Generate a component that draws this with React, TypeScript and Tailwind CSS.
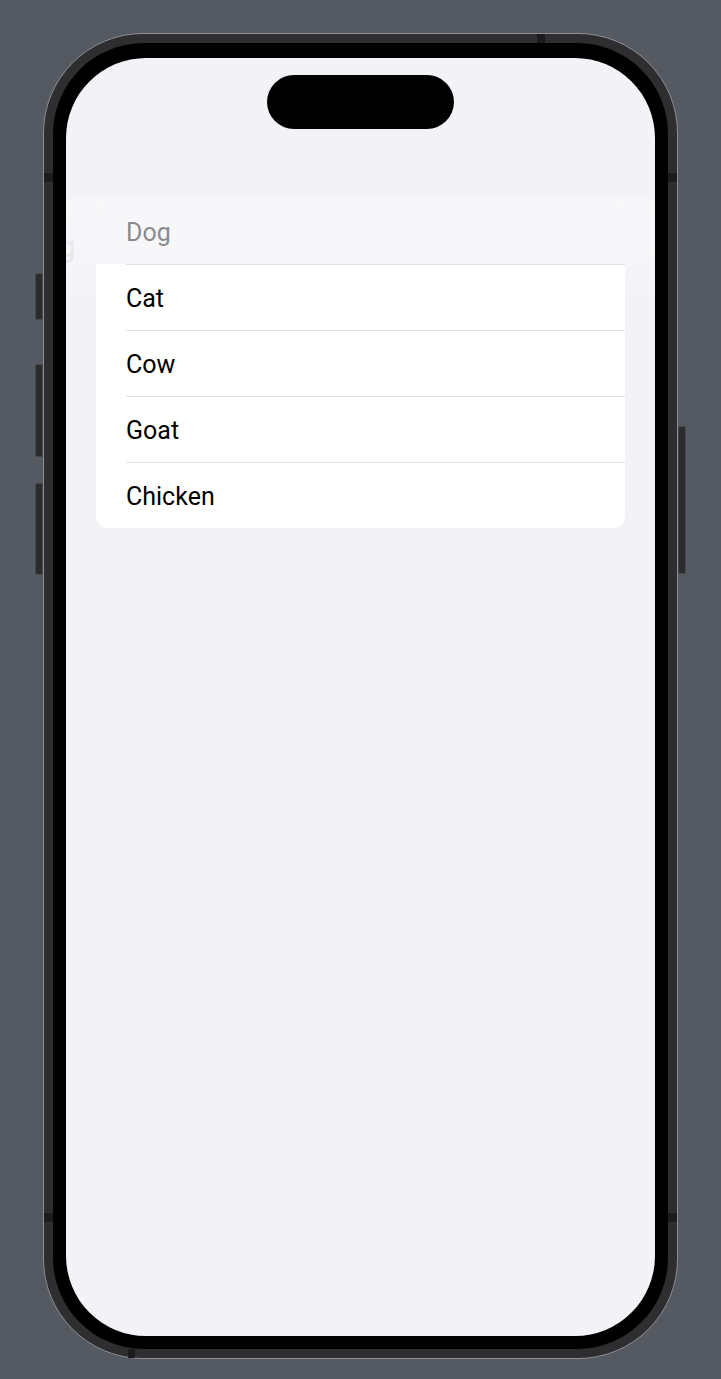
const animals = ['Cat', 'Cow', 'Goat', 'Chicken'];

function SideButton({ className }: { className: string }) {
  return <div className={`absolute w-[8px] bg-[#2c2c2e] border border-[#48484a] ${className}`} />;
}

export default function App() {
  return (
    <div className="w-[721px] h-[1379px] bg-[#555a62] flex justify-center pt-[33px] font-['Roboto',sans-serif]">
      <div className="relative w-[635px] h-[1326px]">
        {/* hardware buttons */}
        <SideButton className="left-[-8px] top-[240px] h-[47px] rounded-l-[2px]" />
        <SideButton className="left-[-8px] top-[331px] h-[93px] rounded-l-[2px]" />
        <SideButton className="left-[-8px] top-[450px] h-[92px] rounded-l-[2px]" />
        <SideButton className="right-[-8px] top-[393px] h-[148px] rounded-r-[2px]" />

        {/* frame */}
        <div className="relative w-full h-full rounded-[100px] border border-[#8e8e90] bg-[#2e2e30] p-[9px]">
          {/* antenna bands */}
          <div className="absolute left-0 top-[139px] w-[9px] h-[9px] bg-[#1c1c1e]" />
          <div className="absolute right-0 top-[139px] w-[9px] h-[9px] bg-[#1c1c1e]" />
          <div className="absolute left-0 top-[1179px] w-[9px] h-[9px] bg-[#1c1c1e]" />
          <div className="absolute right-0 top-[1179px] w-[9px] h-[9px] bg-[#1c1c1e]" />
          <div className="absolute top-0 left-[493px] w-[8px] h-[9px] bg-[#1c1c1e]" />
          <div className="absolute bottom-0 left-[84px] w-[7px] h-[9px] bg-[#1c1c1e]" />

          <div className="w-full h-full rounded-[91px] bg-black pt-[15px] px-[13px] pb-[13px]">
            {/* screen */}
            <div className="relative w-full h-full rounded-[80px] bg-[#f2f2f7] overflow-hidden flex flex-col">
              {/* faded previous nav bar sliding out */}
              <div className="absolute left-0 right-0 top-[141px] h-[113px] bg-gradient-to-b from-white/40 via-white/30 to-white/0 pointer-events-none" />
              <span className="absolute left-[-44px] top-[174px] text-[30px] leading-none text-[#e8e8ec] pointer-events-none">Dog</span>

              <div className="mx-auto mt-[17px] w-[187px] h-[54px] rounded-full bg-black" />

              <div className="relative mx-[30px] mt-[70px] rounded-[12px] overflow-hidden bg-white">
                <div className="h-[65px] bg-[#f7f7f9] pl-[30px] pt-[3px] flex items-center text-[25px] text-[#8a8a8e]">
                  Dog
                </div>
                {animals.map((a) => (
                  <div key={a} className="pl-[30px]">
                    <div className="h-[66px] border-t border-[#e0e0e3] pt-[3px] flex items-center text-[25px] text-black">
                      {a}
                    </div>
                  </div>
                ))}
              </div>
            </div>
          </div>
        </div>
      </div>
    </div>
  );
}
